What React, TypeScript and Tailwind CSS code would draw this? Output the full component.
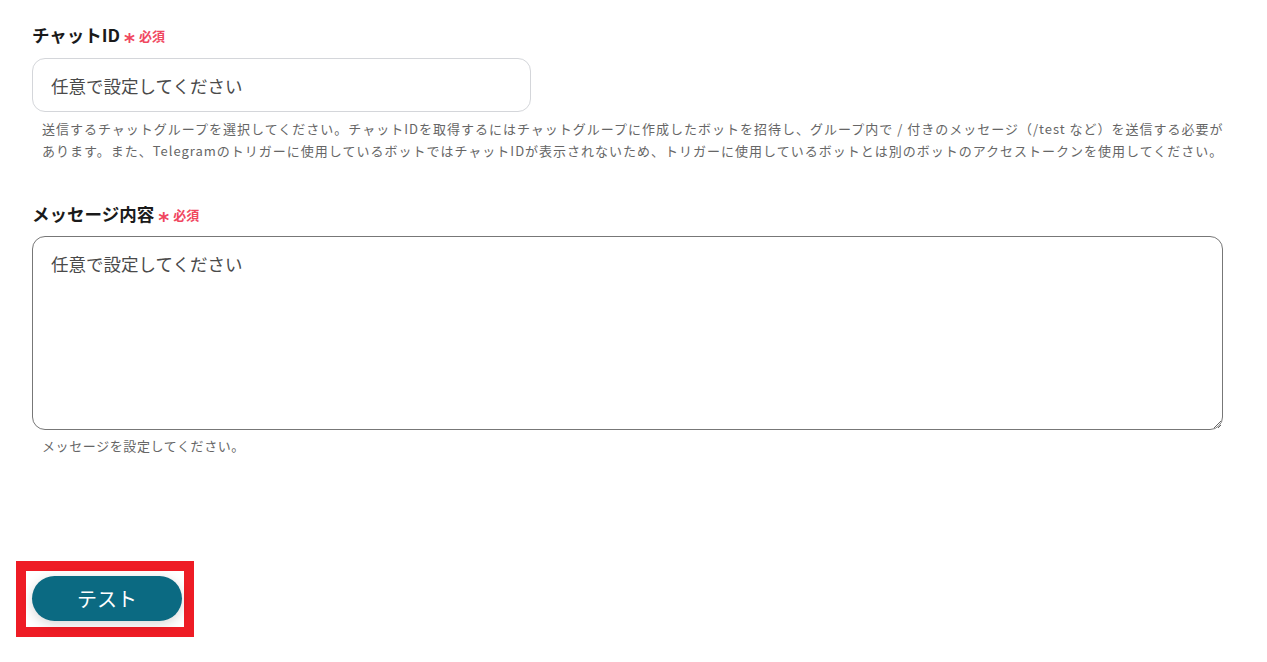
import { useState } from "react";

const font = "font-['Noto_Sans_CJK_JP','Noto_Sans',sans-serif]";

function FieldLabel({ children }: { children: React.ReactNode }) {
  return (
    <div className="flex items-center h-6">
      <span className="text-[17.5px] font-bold text-[#1a1a1a] leading-6">{children}</span>
      <span className="ml-[4px] relative top-[7px] font-['DejaVu_Sans',sans-serif] font-bold text-[21px] text-[#f0475f] leading-none">*</span>
      <span className="ml-[4px] relative top-[1px] text-[13px] font-bold text-[#f0475f] leading-6">必須</span>
    </div>
  );
}

export default function App() {
  const [chatId, setChatId] = useState("");
  const [message, setMessage] = useState("");

  return (
    <div className={`${font} bg-white w-[1267px] h-[662px] overflow-hidden px-8 pt-[23px]`}>
      {/* Chat ID */}
      <FieldLabel>チャットID</FieldLabel>
      <input
        value={chatId}
        onChange={(e) => setChatId(e.target.value)}
        placeholder="任意で設定してください"
        className="mt-[11px] block w-[499px] h-[54px] rounded-[13px] border border-[#d4d6da] px-[18px] text-[17.5px] text-[#333] placeholder-[#4a4a4a] outline-none"
      />
      <p className="mt-[6px] pl-[10px] text-[13px] leading-[22px] text-[#666] whitespace-nowrap tracking-[1px]">
        送信するチャットグループを選択してください。チャットIDを取得するにはチャットグループに作成したボットを招待し、グループ内で / 付きのメッセージ（/test など）を送信する必要が
        <br />
        あります。また、Telegramのトリガーに使用しているボットではチャットIDが表示されないため、トリガーに使用しているボットとは別のボットのアクセストークンを使用してください。
      </p>

      {/* Message */}
      <div className="mt-[40px]">
        <FieldLabel>メッセージ内容</FieldLabel>
      </div>
      <textarea
        value={message}
        onChange={(e) => setMessage(e.target.value)}
        placeholder="任意で設定してください"
        className="mt-[10px] block w-[1191px] h-[194px] rounded-[13px] border border-[#777] px-[18px] py-[14px] text-[17.5px] text-[#333] placeholder-[#4a4a4a] outline-none"
      />
      <p className="mt-[5px] pl-[10px] text-[13px] leading-[22px] text-[#666] tracking-[0.6px]">
        メッセージを設定してください。
      </p>

      {/* Test button, highlighted */}
      <div className="mt-[104px] -ml-4 w-[178px] h-[76px] border-[10px] border-[#ee1c25] pl-[6px] pt-[5px]">
        <button
          type="button"
          className="w-[150px] h-[45px] rounded-full bg-[#0b6a82] text-white text-[20px] font-normal shadow-[0_3px_12px_rgba(0,0,0,0.16)]"
        >
          テスト
        </button>
      </div>
    </div>
  );
}
